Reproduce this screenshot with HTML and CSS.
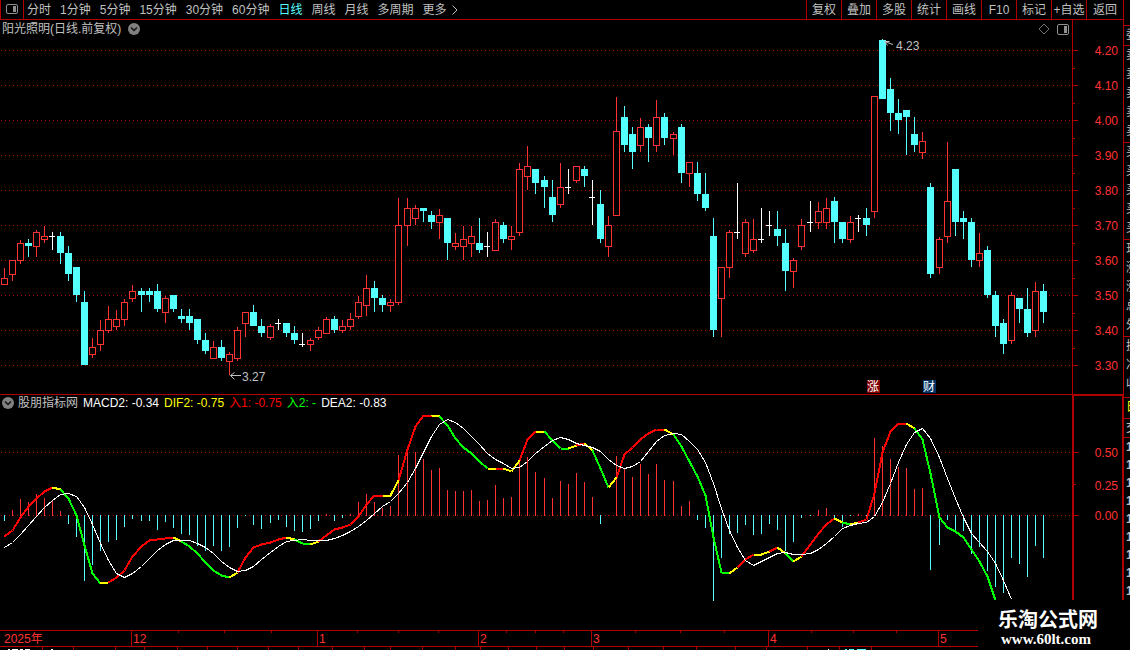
FILE: index.html
```html
<!DOCTYPE html>
<html lang="zh-CN">
<head>
<meta charset="utf-8">
<title>阳光照明 日线</title>
<link rel="stylesheet" href="styles.css">
</head>
<body>
<div class="app">
  <main class="main">
    <nav class="toolbar">
      <button class="layout-btn" aria-label="布局">
        <svg width="12" height="10" viewBox="0 0 12 10"><rect x=".5" y=".5" width="11" height="9" rx="1.5" fill="none" stroke="#909090"/><rect x="7" y="2" width="3" height="6" fill="#909090"/></svg>
      </button>
      <div class="periods">
        <button>分时</button><button>1分钟</button><button>5分钟</button><button>15分钟</button><button>30分钟</button><button>60分钟</button><button class="active">日线</button><button>周线</button><button>月线</button><button>多周期</button><button class="more">更多<svg width="6" height="10" viewBox="0 0 6 10"><path d="M.5 .5L5 5L.5 9.5" fill="none" stroke="#c0c0c0"/></svg></button>
      </div>
      <div class="tools">
        <button>复权</button><button>叠加</button><button>多股</button><button>统计</button><button>画线</button><button>F10</button><button>标记</button><button>+自选</button><button>返回</button>
      </div>
    </nav>

    <div class="board">
      <section class="price">
        <header class="title">
          <h1>阳光照明(日线.前复权)</h1>
          <button class="round" aria-label="展开"><svg width="12" height="12" viewBox="0 0 12 12"><circle cx="6" cy="6" r="6" fill="#808080"/><path d="M3 4.5L6 7.5L9 4.5" fill="none" stroke="#111" stroke-width="1.5"/></svg></button>
          <div class="title-icons">
            <svg width="12" height="12" viewBox="0 0 12 12"><path d="M6 1L11 6L6 11L1 6Z" fill="none" stroke="#707070"/></svg>
            <svg width="12" height="11" viewBox="0 0 12 11"><rect x=".5" y=".5" width="11" height="10" rx="1.5" fill="none" stroke="#909090"/><rect x="7" y="2" width="3" height="7" fill="#909090"/></svg>
          </div>
        </header>
        <svg class="plot" height="356">
          <g transform="translate(0 -38)">
            <g id="price-grid"></g>
            <g id="candles"></g>
            <path d="M884.5 41.5L893 44.5M884.5 41.5h5M884.5 41.5l3 4" class="pointer"/>
            <text x="896" y="50">4.23</text>
            <path d="M230.5 375.5H241M230.5 375.5l4 -3M230.5 375.5l4 4" class="pointer"/>
            <text x="242" y="381">3.27</text>
            <rect x="867" y="380" width="13" height="13" fill="#800000"/>
            <text x="873" y="391" class="badge">涨</text>
            <rect x="923" y="380" width="13" height="13" fill="#003366"/>
            <text x="929" y="391" class="badge">财</text>
          </g>
        </svg>
      </section>
      <svg class="scale price-scale" height="374"><g id="price-scale" transform="translate(0 -20)"></g></svg>

      <section class="macd">
        <header class="legend">
          <button class="round" aria-label="指标"><svg width="12" height="12" viewBox="0 0 12 12"><circle cx="6" cy="6" r="6" fill="#808080"/><path d="M3 4.5L6 7.5L9 4.5" fill="none" stroke="#111" stroke-width="1.5"/></svg></button>
          <span>股朋指标网</span>
          <span class="white">MACD2: -0.34</span>
          <span class="yellow">DIF2: -0.75</span>
          <span class="red">入1: -0.75</span>
          <span class="green">入2: -</span>
          <span class="white">DEA2: -0.83</span>
        </header>
        <svg class="plot" height="219">
          <g transform="translate(0 -411)">
            <g id="macd-grid"></g>
            <g id="bars"></g>
            <g id="dif"></g>
            <g id="dea"></g>
          </g>
        </svg>
      </section>
      <svg class="scale macd-scale" height="234"><g id="macd-scale" transform="translate(0 -396)"></g></svg>
    </div>

    <svg class="dates" height="15"><g id="dates" transform="translate(0 -631)"></g></svg>
    <svg class="status" height="3"><g id="status"></g></svg>
  </main>

  <aside class="quotes">
    <div class="q-head"></div>
    <div class="q-cell q-ratio">委</div>
    <div class="q-cell q-five">卖<br>卖<br>卖<br>卖<br>卖</div>
    <div class="q-cell q-five">买<br>买<br>买<br>买<br>买</div>
    <div class="q-cell q-five">现<br>涨<br>涨<br>总<br>外</div>
    <div class="q-cell q-three">换<br>净<br>收</div>
    <div class="q-cell q-tab">日</div>
    <div class="q-cell q-deal">交</div>
    <div class="q-cell q-ticks">1<br>1<br>1<br>1<br>1<br>1<br>1<br>1<br>1</div>
  </aside>

  <footer class="mark">
    <strong>乐淘公式网</strong>
    <a href="#">www.60lt.com</a>
  </footer>
</div>
<script src="chart.js"></script>
</body>
</html>
```

FILE: styles.css
```css
* { box-sizing: border-box; }

body {
  margin: 0;
  background: #000;
  color: #c0c0c0;
  font: 12px/16px "Liberation Sans", "Noto Sans CJK SC", sans-serif;
}

button {
  margin: 0;
  padding: 0;
  border: 0;
  background: none;
  color: inherit;
  font: inherit;
  white-space: nowrap;
}

svg { display: block; flex: none; }

.app {
  position: relative;
  display: grid;
  grid-template-columns: minmax(0, 1fr) 7px;
  min-height: 100vh;
  overflow: hidden;
}

/* toolbar */
.toolbar {
  display: flex;
  height: 20px;
  border-bottom: 1px solid #b00000;
  border-left: 1px solid #b00000;
}

.layout-btn {
  display: flex;
  align-items: center;
  justify-content: center;
  width: 23px;
  padding-bottom: 2px;
  border-right: 1px solid #b00000;
}

.periods {
  display: flex;
  flex: 1;
  align-items: center;
  gap: 9px;
  padding-left: 3px;
}

.periods .active { color: #54ffff; }

.more { display: flex; align-items: center; gap: 5px; }

.tools { display: flex; }

.tools button {
  width: 35px;
  border-left: 1px solid #b00000;
}

.tools button:last-child { width: 37px; }

/* chart area */
.board {
  display: grid;
  grid-template-columns: minmax(0, 1fr) 51px;
}

.plot, .dates, .status { width: 100%; }

.plot text { fill: #c0c0c0; }

.plot .badge { fill: #fff; text-anchor: middle; }

.pointer { fill: none; stroke: #c0c0c0; }

.title {
  display: flex;
  align-items: center;
  gap: 7px;
  height: 18px;
  padding: 0 3px 0 2px;
}

.title h1 { margin: 0; font-size: 12px; line-height: 18px; font-weight: 400; }

.title-icons {
  display: flex;
  align-items: center;
  gap: 7px;
  margin-left: auto;
}

.macd { border-top: 1px solid #b00000; }

.legend {
  display: flex;
  align-items: center;
  gap: 5px;
  height: 16px;
  padding-left: 2px;
  white-space: nowrap;
}

.legend .round { margin-right: -1px; }

.white { color: #fff; }
.yellow { color: #ff0; }
.red { color: #f00; }
.green { color: #0f0; }

.scale { width: 100%; }

.scale text, .dates text { fill: #ff3232; }

.scale text { text-anchor: end; }

.price-scale { border-left: 1px solid #b00000; }

.macd-scale {
  height: 236px;
  border: 2px solid #b00000;
  border-right-width: 1px;
  border-bottom: 0;
}

.dates {
  height: 16px;
  border-top: 1px solid #b00000;
}

.status {
  height: 4px;
  border-top: 1px solid #b00000;
}

#candles, #bars, #dif, #dea, #price-grid, #macd-grid, #price-scale, #macd-scale, #dates, #status {
  shape-rendering: crispEdges;
}

.grid { stroke: #b00000; stroke-dasharray: 1 3; }
.tick { fill: #b00000; }
.down { fill: #54ffff; }
.up { fill: #ff3232; }
.up-box { fill: #000; stroke: #ff3232; }
.flat { fill: #fff; }

.dif { fill: none; stroke-width: 2; }
.dif-r { stroke: #f00; }
.dif-y { stroke: #ff0; }
.dif-g { stroke: #0f0; }
.dea { fill: none; stroke: #fff; }

/* quote column at the window edge */
.quotes {
  overflow: hidden;
  border-left: 1px solid #b00000;
  white-space: nowrap;
}

.q-head { height: 25px; }

.q-cell {
  border-top: 1px solid #b00000;
  padding-left: 2px;
  line-height: 19px;
  overflow: hidden;
}

.q-ratio { height: 20px; }
.q-five { height: 97px; }
.q-three { height: 61px; }
.q-tab { height: 21px; color: #ff0; }
.q-deal { height: 19px; }
.q-ticks { height: 193px; line-height: 18px; font-weight: 700; }

/* site mark */
.mark {
  position: absolute;
  right: 0;
  bottom: 0;
  display: flex;
  flex-direction: column;
  width: 152px;
  height: 50px;
  padding: 6px 0 0 20px;
  background: #000;
}

.mark strong {
  color: #fff;
  font: 700 20px/25px "Noto Sans CJK SC", sans-serif;
}

.mark a {
  padding-left: 3px;
  color: #fff;
  font: 700 15px/17px "Liberation Serif", serif;
  text-decoration: none;
}
```

FILE: chart.js
```js
const NS = "http://www.w3.org/2000/svg";

function add(id, tag, attrs, text) {
  const el = document.createElementNS(NS, tag);
  for (const key in attrs) el.setAttribute(key, attrs[key]);
  if (text) el.textContent = text;
  document.getElementById(id).appendChild(el);
}

function rect(id, x, y, width, height, cls) {
  if (width > 0 && height > 0) add(id, "rect", { x, y, width, height, class: cls });
}

// x, high, body top, body bottom, low, kind (r up, c down, w flat)
const candles = `
4 268 278 285 285 r|12 260 260 275 281 r|20 240 243 261 264 r|28 239 243 246 257 c|36 230 232 247 257 r
44 226 236 240 243 r|52 232 236 237 250 w|60 232 236 253 264 c|68 246 253 274 281 c|76 267 267 295 302 c
84 291 302 365 365 c|92 338 347 355 358 r|100 320 330 345 351 r|108 306 319 331 333 r|116 310 319 327 330 r
124 299 302 320 326 r|132 285 291 299 302 r|141 288 291 295 312 c|149 288 291 295 302 c|157 284 291 309 312 c
165 296 298 313 323 r|173 295 295 309 312 c|181 309 316 319 323 c|189 309 316 323 330 c|197 319 319 340 344 c
205 333 340 351 354 c|213 341 347 359 359 r|221 340 347 358 361 c|229 352 354 362 375 r|237 327 330 359 361 r
245 312 312 324 337 r|253 305 312 326 326 c|261 319 326 333 337 c|270 324 326 338 340 r|278 319 323 324 330 w
286 323 323 333 337 c|294 326 333 340 344 c|302 333 344 345 347 w|310 338 340 345 351 r|318 327 330 338 340 r
326 317 319 334 334 r|334 316 319 330 333 c|342 320 326 331 333 r|350 313 319 327 330 r|358 296 302 317 319 r
366 275 288 306 316 r|374 281 288 298 312 c|382 295 298 305 312 c|390 299 302 306 312 r|398 198 225 303 305 r
407 198 208 226 246 r|415 205 208 219 225 r|423 208 208 211 222 c|431 211 215 222 229 c|439 209 215 223 239 r
447 218 218 243 260 c|455 233 243 247 250 r|463 226 239 247 260 r|471 226 236 244 257 r|479 218 243 250 253 c
487 232 246 247 257 w|495 219 222 251 251 r|503 222 225 239 243 c|511 226 236 240 250 r|519 163 169 233 236 r
527 146 166 177 190 r|535 169 169 183 194 c|544 176 180 187 208 c|552 180 197 215 222 c|560 163 187 205 208 r
568 169 187 188 194 w|576 166 166 181 183 r|584 166 169 176 187 c|592 180 197 198 225 w|600 190 204 239 243 c
608 216 225 247 257 r|616 97 131 216 216 r|624 106 117 145 152 c|632 127 134 152 169 c|640 118 127 146 152 r
648 124 127 138 162 c|656 100 117 146 152 r|664 113 117 138 145 c|673 132 134 139 155 r|681 124 127 173 183 c
689 162 162 174 187 r|697 162 173 194 201 c|705 173 194 208 211 c|713 218 236 330 337 c|721 267 267 299 337 r
729 230 232 268 278 r|737 183 232 233 239 w|745 219 222 254 257 r|753 219 239 251 253 r|761 208 239 240 243 w
769 211 225 226 236 w|777 211 229 236 246 c|785 229 243 271 291 c|793 258 260 272 288 r|801 219 225 247 250 r
810 201 222 223 232 w|818 202 211 223 229 r|826 198 208 223 229 r|834 197 201 222 243 c|842 222 222 239 243 c
850 216 222 240 243 r|858 215 218 219 232 w|866 208 218 225 236 c|874 96 96 212 218 r|882 39 40 99 99 c
890 78 89 113 131 c|898 99 113 120 134 c|906 110 110 117 155 c|914 117 134 145 152 c|922 132 141 153 159 r
930 183 187 274 278 c|939 237 239 268 274 r|947 142 201 237 243 r|955 169 169 222 236 c|963 211 218 222 239 c
971 218 222 260 267 c|979 233 253 261 267 r|987 246 250 295 298 c|995 291 295 326 337 c|1003 319 323 344 354 c
1011 292 295 341 344 r|1019 298 298 309 323 c|1027 288 309 333 337 c|1035 282 291 331 337 r|1043 284 291 312 323 c
`.trim().split(/[|\n]/).map(s => s.split(" ").map((v, i) => (i < 5 ? Number(v) : v)));

const list = s => s.trim().split(/\s+/).map(Number);

// end of each histogram bar; the zero line is at 515
const bars = list(`
521 510 499 502 494 498 500 511 524 537 581 565 551 542 540 527 519 521 521 530
522 528 534 535 546 551 546 551 547 528 516 525 529 523 520 527 531 532 529 521
514 521 518 514 502 494 502 508 506 455 450 452 459 470 468 490 491 491 490 501
500 485 498 497 459 457 472 478 498 481 484 473 482 497 524 515 456 469 477 464
474 464 480 481 506 501 520 528 601 558 534 533 525 535 534 524 530 551 542 518
516 510 508 518 527 516 514 516 438 446 459 467 468 489 488 570 545 520 530 531
554 547 571 587 593 558 564 577 546 558`);

const dif = list(`
536 530 517 506 498 491 487 489 498 515 545 573 583 582 577 570 556 546 540 539
538 537 541 546 553 562 570 575 577 572 557 547 544 542 539 537 539 543 544 541
535 529 527 524 516 504 495 495 495 480 449 426 415 415 416 425 438 447 453 461
468 468 468 471 460 439 431 431 440 448 448 445 443 450 468 487 477 454 447 439
433 429 429 434 446 461 476 495 537 572 573 567 559 554 554 551 547 553 561 556
544 533 524 518 522 524 522 519 493 452 431 423 423 428 439 473 517 527 531 537
549 561 576 600`);

// colour of the segment that ends at each DIF point, as colour and run length
const difColours = (
  "r7 y1 g5 y1 r8 y1 g6 y1 r6 y1 g2 y1 r8 y2 r4 y1 g6 y1 r1 y2 r2 y1 g3 y1 r1 y1 g2 y1 " +
  "r6 y1 g7 y1 r2 y2 r1 y1 g1 y1 r4 y1 g1 y1 r6 y1 g10"
).split(" ").map(run => run[0].repeat(Number(run.slice(1)))).join("");

const dea = list(`
547 542 534 525 516 507 500 494 493 496 507 524 543 560 573 577 573 566 558 550
544 540 540 540 543 547 553 561 567 571 570 566 559 552 546 541 540 539 540 540
540 538 535 531 526 520 513 506 501 493 482 468 452 436 424 419 422 428 436 444
453 459 463 468 467 461 453 446 440 437 439 443 445 447 451 459 465 468 466 461
451 441 435 433 434 441 449 462 483 508 530 547 560 565 561 557 553 552 554 554
553 549 543 536 528 525 523 522 516 502 483 462 444 432 428 438 457 478 498 517
533 542 551 563 580 599`);

function gridLine(id, y) {
  add(id, "line", { x1: 1, x2: 1071, y1: y + 0.5, y2: y + 0.5, class: "grid" });
}

// price panel
for (let i = 0; i < 10; i++) {
  const y = 50 + 35 * i;
  gridLine("price-grid", y);
  rect("price-scale", 0, y, 5, 1, "tick");
  if (i < 9) rect("price-scale", 0, y + 18, 2, 1, "tick");
  add("price-scale", "text", { x: 45, y: y + 5 }, (4.2 - i / 10).toFixed(2));
}

for (const [x, high, top, bottom, low, kind] of candles) {
  if (kind === "w") {
    rect("candles", x, high, 1, low - high, "flat");
    rect("candles", x - 3, top, 6, 1, "flat");
  } else {
    rect("candles", x, high, 1, low - high, kind === "r" ? "up" : "down");
    if (kind === "c") rect("candles", x - 3, top, 7, bottom - top, "down");
    else rect("candles", x - 2.5, top + 0.5, 6, bottom - top - 1, "up-box");
  }
}

// MACD panel
gridLine("macd-grid", 452);
gridLine("macd-grid", 515);
[[452, 5, "0.50", 457], [484, 2, "0.25", 490], [515, 5, "0.00", 520]].forEach(([y, w, label, base]) => {
  rect("macd-scale", 0, y, w, 1, "tick");
  add("macd-scale", "text", { x: 44, y: base }, label);
});

bars.forEach((y, i) => {
  const x = candles[i][0];
  if (y > 515) rect("bars", x, 515, 1, y - 515, "down");
  else rect("bars", x, y, 1, 516 - y, y === 515 ? "tick" : "up");
});

const at = (series, i) => `${candles[i][0] + 0.5} ${series[i] + 0.5}`;
for (let i = 1; i < dif.length; i++) {
  add("dif", "path", { d: `M${at(dif, i - 1)}L${at(dif, i)}`, class: `dif dif-${difColours[i]}` });
}
add("dea", "polyline", { points: dea.map((_, i) => at(dea, i)).join(" "), class: "dea" });

// date axis
[178, 224, 271, 357, 398, 438, 506, 535, 563, 635, 680, 724, 811, 853, 896].forEach(x =>
  rect("dates", x, 631, 1, 2, "tick"));
[[131, "12"], [317, "1"], [478, "2"], [591, "3"], [768, "4"], [938, "5"]].forEach(([x, label]) => {
  rect("dates", x, 631, 1, 15, "tick");
  add("dates", "text", { x: x + 2, y: 643 }, label);
});
add("dates", "text", { x: 4, y: 643 }, "2025年");

// tab dividers and tab tops of the status row
[42, 73, 115, 144, 177, 207, 237, 268, 298, 332, 364, 390, 422, 455, 480, 508, 536, 564, 593, 628,
  663, 696, 735, 766, 807, 839, 871].forEach(x => rect("status", x, 0, 1, 3, "tick"));
[[8, 2], [12, 6], [20, 3], [25, 5], [51, 2], [828, 1]].forEach(([x, w]) => rect("status", x, 2, w, 1, "flat"));
[[845, 2], [849, 5], [857, 9]].forEach(([x, w]) => rect("status", x, 2, w, 1, "down"));
```
